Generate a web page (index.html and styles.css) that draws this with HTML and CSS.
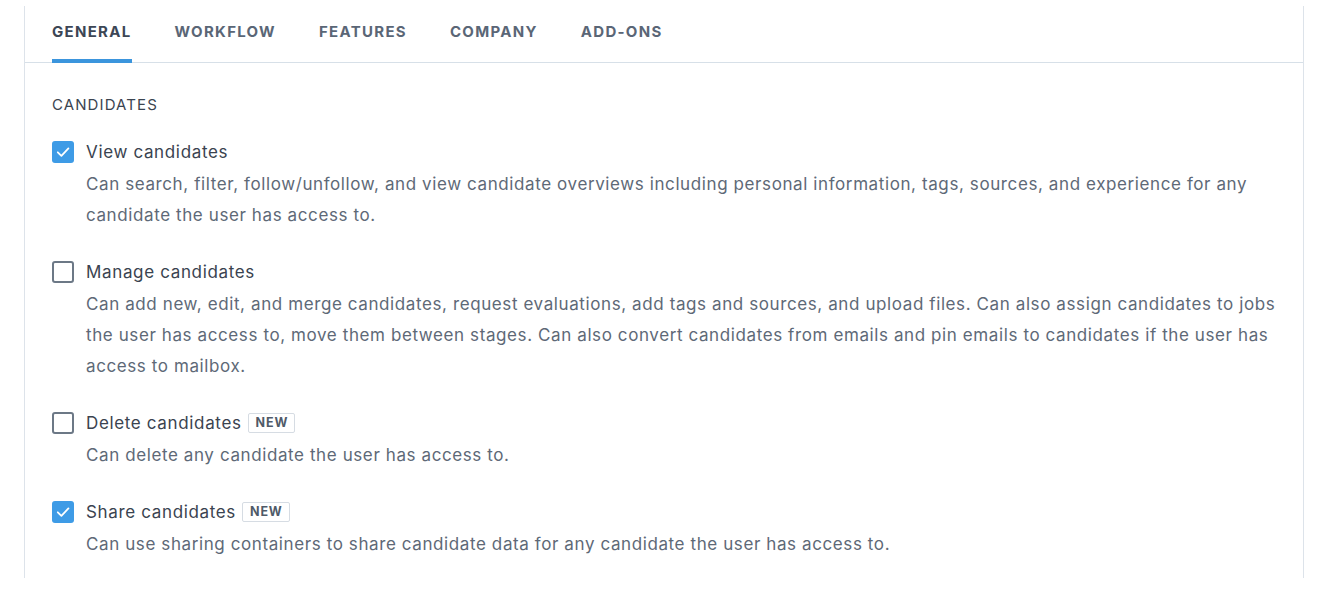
FILE: index.html
```html
<!DOCTYPE html>
<html>
<head>
<meta charset="utf-8">
<link rel="stylesheet" href="styles.css">
</head>
<body>
<div class="panel">
  <nav class="tabs">
    <a class="tab active">General</a>
    <a class="tab">Workflow</a>
    <a class="tab">Features</a>
    <a class="tab">Company</a>
    <a class="tab">Add-ons</a>
  </nav>
  <section class="content">
    <h3 class="section-title">CANDIDATES</h3>
    <div class="perm">
      <div class="perm-head">
        <span class="box checked"><svg viewBox="0 0 22 22" width="22" height="22"><path d="M5.8 11.3l3.6 3.5 7-7.4" fill="none" stroke="#fff" stroke-width="1.8" stroke-linecap="round" stroke-linejoin="round"/></svg></span>
        <span class="label">View candidates</span>
      </div>
      <p class="desc">Can search, filter, follow/unfollow, and view candidate overviews including personal information, tags, sources, and experience for any candidate the user has access to.</p>
    </div>
    <div class="perm">
      <div class="perm-head">
        <span class="box"></span>
        <span class="label">Manage candidates</span>
      </div>
      <p class="desc">Can add new, edit, and merge candidates, request evaluations, add tags and sources, and upload files. Can also assign candidates to jobs the user has access to, move them between stages. Can also convert candidates from emails and pin emails to candidates if the user has access to mailbox.</p>
    </div>
    <div class="perm">
      <div class="perm-head">
        <span class="box"></span>
        <span class="label">Delete candidates</span>
        <span class="badge">NEW</span>
      </div>
      <p class="desc">Can delete any candidate the user has access to.</p>
    </div>
    <div class="perm">
      <div class="perm-head">
        <span class="box checked"><svg viewBox="0 0 22 22" width="22" height="22"><path d="M5.8 11.3l3.6 3.5 7-7.4" fill="none" stroke="#fff" stroke-width="1.8" stroke-linecap="round" stroke-linejoin="round"/></svg></span>
        <span class="label">Share candidates</span>
        <span class="badge">NEW</span>
      </div>
      <p class="desc">Can use sharing containers to share candidate data for any candidate the user has access to.</p>
    </div>
  </section>
</div>
</body>
</html>
```

FILE: styles.css
```css
* { box-sizing: border-box; }
html, body { margin: 0; padding: 0; background: #fff; }
body {
  font-family: Inter, "Noto Sans", "Liberation Sans", sans-serif;
  color: #3a4350;
  padding: 6px 18px 0 24px;
}
.panel {
  border-left: 1px solid #dde3ea;
  border-right: 1px solid #dde3ea;
  height: 572px;
  width: 1280px;
}
.tabs {
  display: flex;
  gap: 43px;
  padding-left: 27px;
  border-bottom: 1px solid #d7e0e8;
  height: 57px;
}
.tab {
  display: block;
  font-size: 15px;
  font-weight: 700;
  text-transform: uppercase;
  letter-spacing: 1.3px;
  color: #5a6676;
  padding-top: 16px;
  height: 57px;
  border-bottom: 4px solid transparent;
}
.tab.active {
  color: #3c4655;
  border-bottom-color: #3b95dd;
}
.content {
  padding: 32px 24px 0 27px;
}
.section-title {
  margin: 0 0 26px;
  font-size: 15px;
  line-height: 20px;
  font-weight: 400;
  color: #3b4450;
  letter-spacing: 1.1px;
}
.perm { margin-bottom: 30px; }
.perm-head {
  display: flex;
  align-items: center;
  height: 22px;
}
.box {
  width: 22px;
  height: 22px;
  border: 2px solid #6c7886;
  border-radius: 3px;
  margin-right: 12px;
  flex: none;
}
.box.checked {
  border: none;
  background: #3e9be6;
}
.box svg { display: block; }
.label {
  font-size: 17px;
  letter-spacing: 0.65px;
  color: #3a4350;
}
.badge {
  margin-left: 6px;
  border: 1px solid #d6dce3;
  border-radius: 2px;
  font-size: 12.5px;
  font-weight: 700;
  color: #4f5a68;
  letter-spacing: 0.9px;
  padding: 2px 6px 2px 7px;
  line-height: 14px;
}
.desc {
  margin: 6px 0 0 34px;
  font-size: 17px;
  line-height: 31px;
  letter-spacing: 0.6px;
  color: #5e6977;
}
```
